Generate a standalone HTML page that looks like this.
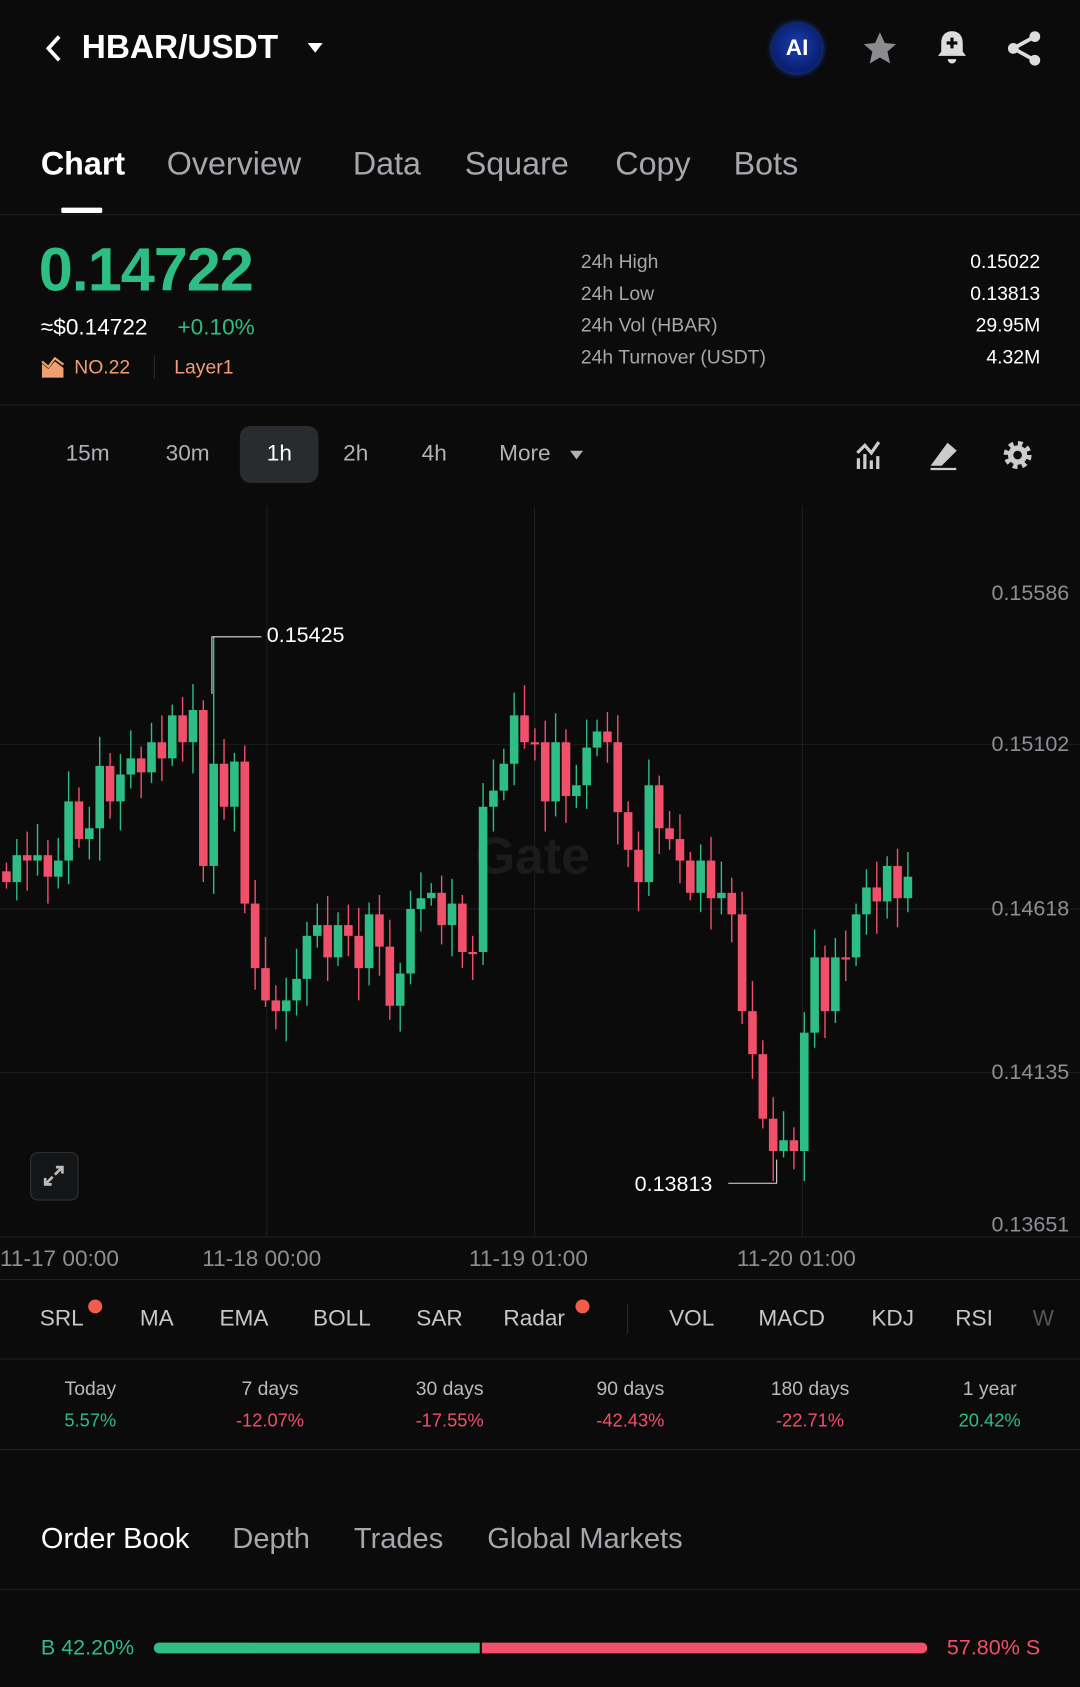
<!DOCTYPE html>
<html><head><meta charset="utf-8"><style>
html,body{margin:0;padding:0;background:#0b0b0c;width:1080px;height:1687px;overflow:hidden}
#w{position:absolute;left:0;top:0;width:1004px;height:1568px;transform:scale(1.07570);transform-origin:0 0;font-family:"Liberation Sans",sans-serif;color:#fff;background:#0b0b0c}
.a{position:absolute;white-space:nowrap}
.l{position:absolute;left:0;width:1004px;height:1px;background:#1f2022}
.g{color:#2ebd85}.r{color:#f0506a}.gr{color:#a5a7ab}
.t{font-size:30px;top:136px}
.tf{font-size:21px;top:410px;color:#b0b2b6}
.ind{font-size:21px;top:1214px;color:#c6c7ca}
.sl{font-size:18px;top:1281px;color:#b8babd;width:120px;text-align:center}
.sv{font-size:17px;top:1311px;width:120px;text-align:center}
.yl{font-size:20px;color:#8d8f93;right:10px}
</style></head><body><div id="w">
<svg class="a" style="left:38px;top:30px" width="24" height="30"><path d="M17 4 L7 15 L17 26" stroke="#fff" stroke-width="3.5" fill="none"/></svg>
<div class="a" style="left:76px;top:26px;font-size:31px;font-weight:bold">HBAR/USDT</div>
<svg class="a" style="left:285px;top:38px" width="16" height="12"><path d="M1 2 H15 L8 11Z" fill="#fff"/></svg>
<div class="a" style="left:718px;top:22px;width:46px;height:46px;border-radius:50%;background:radial-gradient(circle at 50% 45%,#1b3fb0,#0a1e70 70%,#1a4cff);box-shadow:0 0 6px #1a5cff;color:#fff;font-weight:bold;font-size:21px;text-align:center;line-height:46px">AI</div>
<svg class="a" style="left:800px;top:27px" width="36" height="36"><path d="M18 3 L22.5 13 L33 14 L25 21 L27.5 32 L18 26.5 L8.5 32 L11 21 L3 14 L13.5 13Z" fill="#8a8c90"/></svg>
<svg class="a" style="left:868px;top:26px" width="34" height="36"><path d="M17 3 C10 3 7 8 7 14 V22 L4 26 H30 L27 22 V14 C27 8 24 3 17 3Z M13 29 H21 A4 4 0 0 1 13 29Z" fill="#ddd"/><path d="M17 9 V19 M12 14 H22" stroke="#0b0b0c" stroke-width="3"/></svg>
<svg class="a" style="left:934px;top:27px" width="36" height="36"><circle cx="28" cy="7" r="5" fill="#ddd"/><circle cx="8" cy="18" r="5" fill="#ddd"/><circle cx="28" cy="29" r="5" fill="#ddd"/><path d="M28 7 L8 18 L28 29" stroke="#ddd" stroke-width="3.5" fill="none"/></svg>

<div class="a t" style="left:38px;font-weight:bold">Chart</div>
<div class="a t gr" style="left:155px">Overview</div>
<div class="a t gr" style="left:328px">Data</div>
<div class="a t gr" style="left:432px">Square</div>
<div class="a t gr" style="left:572px">Copy</div>
<div class="a t gr" style="left:682px">Bots</div>
<div class="a" style="left:57px;top:193px;width:38px;height:5px;background:#fff;border-radius:1px"></div>
<div class="l" style="top:199px"></div>

<div class="a g" style="left:36px;top:218px;font-size:57px;font-weight:bold;letter-spacing:-1px">0.14722</div>
<div class="a" style="left:38px;top:293px;font-size:21px">≈$0.14722</div>
<div class="a g" style="left:165px;top:293px;font-size:21px">+0.10%</div>
<svg class="a" style="left:38px;top:330px" width="22" height="22"><path d="M1 21 V8 L7 13 L13 6 L21 12 V21Z" fill="#f0a070"/><path d="M1 6 L7 11 L13 3 L21 9" stroke="#f0a070" stroke-width="2" fill="none"/></svg>
<div class="a" style="left:69px;top:331px;font-size:18px;color:#f0a070">NO.22</div>
<div class="a" style="left:143px;top:330px;width:1px;height:22px;background:#2a2b2e"></div>
<div class="a" style="left:162px;top:331px;font-size:18px;color:#f0a070">Layer1</div>

<div class="a gr" style="left:540px;top:233px;font-size:18px">24h High</div>
<div class="a gr" style="left:540px;top:263px;font-size:18px">24h Low</div>
<div class="a gr" style="left:540px;top:292px;font-size:18px">24h Vol (HBAR)</div>
<div class="a gr" style="left:540px;top:322px;font-size:18px">24h Turnover (USDT)</div>
<div class="a" style="right:37px;top:233px;font-size:18px">0.15022</div>
<div class="a" style="right:37px;top:263px;font-size:18px">0.13813</div>
<div class="a" style="right:37px;top:292px;font-size:18px">29.95M</div>
<div class="a" style="right:37px;top:322px;font-size:18px">4.32M</div>
<div class="l" style="top:376px"></div>

<div class="a" style="left:223px;top:396px;width:73px;height:53px;background:#2a2b2e;border-radius:10px"></div>
<div class="a tf" style="left:61px">15m</div>
<div class="a tf" style="left:154px">30m</div>
<div class="a tf" style="left:248px;color:#fff">1h</div>
<div class="a tf" style="left:319px">2h</div>
<div class="a tf" style="left:392px">4h</div>
<div class="a tf" style="left:464px">More</div>
<svg class="a" style="left:529px;top:418px" width="14" height="10"><path d="M1 1 H13 L7 9Z" fill="#b0b2b6"/></svg>
<svg class="a" style="left:795px;top:408px" width="30" height="30"><path d="M3 28 V18 M9 28 V14 M15 28 V20 M21 28 V16" stroke="#ccc" stroke-width="3"/><path d="M2 13 L9 6 L15 13 L22 3" stroke="#ccc" stroke-width="3" fill="none"/></svg>
<svg class="a" style="left:863px;top:408px" width="30" height="30"><path d="M2 28 H26 M4 24 L18 5 L25 11 L12 24Z" fill="#ccc" stroke="#ccc" stroke-width="2"/></svg>
<svg class="a" style="left:931px;top:408px" width="30" height="30"><circle cx="15" cy="15" r="10" fill="none" stroke="#ccc" stroke-width="6" stroke-dasharray="4 3.85"/><circle cx="15" cy="15" r="9" fill="#ccc"/><circle cx="15" cy="15" r="4" fill="#0b0b0c"/></svg>

<svg class="a" style="left:0;top:0" width="1004" height="1200">
<g stroke="#1c1d1f" stroke-width="1">
<line x1="0" y1="692" x2="1004" y2="692"/><line x1="0" y1="845" x2="1004" y2="845"/><line x1="0" y1="997" x2="1004" y2="997"/><line x1="0" y1="1150" x2="1004" y2="1150"/>
<line x1="248" y1="470" x2="248" y2="1150"/><line x1="497" y1="470" x2="497" y2="1150"/><line x1="746" y1="470" x2="746" y2="1150"/>
</g>
<text x="495" y="812" font-size="48" font-weight="bold" fill="#1a1b1d" text-anchor="middle" font-family="Liberation Sans">Gate</text>
<g id="cd"></g>
<path d="M197 645 V592 H243" stroke="#ddd" fill="none" stroke-width="1"/>
<text x="248" y="597" font-size="20" fill="#fff" font-family="Liberation Sans">0.15425</text>
<path d="M722 1078 V1100 H677" stroke="#ddd" fill="none" stroke-width="1"/>
<text x="590" y="1107" font-size="20" fill="#fff" font-family="Liberation Sans">0.13813</text>
</svg>
<div class="a yl" style="top:541px">0.15586</div>
<div class="a yl" style="top:681px">0.15102</div>
<div class="a yl" style="top:834px">0.14618</div>
<div class="a yl" style="top:986px">0.14135</div>
<div class="a yl" style="top:1128px">0.13651</div>
<div class="a" style="left:28px;top:1071px;width:43px;height:43px;border:1.5px solid #333;border-radius:7px;background:#141517"></div>
<svg class="a" style="left:38px;top:1081px" width="24" height="24"><path d="M14 4 H20 V10 M20 4 L13 11 M10 20 H4 V14 M4 20 L11 13" stroke="#bbb" stroke-width="2.5" fill="none"/></svg>
<div class="a" style="left:0;top:1159px;font-size:21px;color:#8d8f93">11-17 00:00</div>
<div class="a" style="left:188px;top:1159px;font-size:21px;color:#8d8f93">11-18 00:00</div>
<div class="a" style="left:436px;top:1159px;font-size:21px;color:#8d8f93">11-19 01:00</div>
<div class="a" style="left:685px;top:1159px;font-size:21px;color:#8d8f93">11-20 01:00</div>
<div class="l" style="top:1189px"></div>

<div class="a ind" style="left:37px">SRL</div><div class="a" style="left:82px;top:1208px;width:13px;height:13px;border-radius:50%;background:#f25c4a"></div>
<div class="a ind" style="left:130px">MA</div>
<div class="a ind" style="left:204px">EMA</div>
<div class="a ind" style="left:291px">BOLL</div>
<div class="a ind" style="left:387px">SAR</div>
<div class="a ind" style="left:468px">Radar</div><div class="a" style="left:535px;top:1208px;width:13px;height:13px;border-radius:50%;background:#f25c4a"></div>
<div class="a" style="left:583px;top:1212px;width:1px;height:28px;background:#2a2b2e"></div>
<div class="a ind" style="left:622px">VOL</div>
<div class="a ind" style="left:705px">MACD</div>
<div class="a ind" style="left:810px">KDJ</div>
<div class="a ind" style="left:888px">RSI</div>
<div class="a ind" style="left:960px;color:#555">W</div>
<div class="l" style="top:1263px"></div>

<div class="a sl" style="left:24px">Today</div><div class="a sv g" style="left:24px">5.57%</div>
<div class="a sl" style="left:191px">7 days</div><div class="a sv r" style="left:191px">-12.07%</div>
<div class="a sl" style="left:358px">30 days</div><div class="a sv r" style="left:358px">-17.55%</div>
<div class="a sl" style="left:526px">90 days</div><div class="a sv r" style="left:526px">-42.43%</div>
<div class="a sl" style="left:693px">180 days</div><div class="a sv r" style="left:693px">-22.71%</div>
<div class="a sl" style="left:860px">1 year</div><div class="a sv g" style="left:860px">20.42%</div>
<div class="l" style="top:1347px"></div>

<div class="a" style="left:38px;top:1415px;font-size:27px">Order Book</div>
<div class="a gr" style="left:216px;top:1415px;font-size:27px">Depth</div>
<div class="a gr" style="left:329px;top:1415px;font-size:27px">Trades</div>
<div class="a gr" style="left:453px;top:1415px;font-size:27px">Global Markets</div>
<div class="l" style="top:1477px"></div>

<div class="a g" style="left:38px;top:1521px;font-size:20px">B 42.20%</div>
<div class="a" style="left:143px;top:1527px;width:303px;height:10px;background:#2ebd85;border-radius:5px 0 0 5px"></div>
<div class="a" style="left:448px;top:1527px;width:414px;height:10px;background:#f0506a;border-radius:0 5px 5px 0"></div>
<div class="a r" style="right:37px;top:1521px;font-size:20px">57.80% S</div>
</div>
<script>
(function(){
var c=[820,795,800,795,815,800,745,780,770,712,745,720,705,718,690,705,665,690,660,805,710,750,708,840,900,930,940,930,910,870,860,890,860,870,900,850,880,935,905,845,835,830,860,840,885,885,750,735,710,665,690,690,745,690,740,730,695,680,690,755,790,820,730,770,780,800,830,800,835,830,850,940,980,1040,1070,1060,1070,960,890,940,890,890,850,825,838,805,835,815];
var n=c.length,s=(844-6)/(n-1),prev=810,g=document.getElementById('cd'),NS='http://www.w3.org/2000/svg';
for(var i=0;i<n;i++){var o=prev,cl=c[i],x=6+i*s,tp=Math.min(o,cl),bt=Math.max(o,cl);
var hi=tp-(8+(i*7)%22),lo=bt+(6+(i*11)%25);
if(Math.abs(x-197)<5)hi=592; if(Math.abs(x-722)<5)lo=1098;
var col=cl<o?'#2ebd85':'#f0506a';if(bt-tp<2){bt=tp+2;}
var ln=document.createElementNS(NS,'line');ln.setAttribute('x1',x);ln.setAttribute('x2',x);ln.setAttribute('y1',hi);ln.setAttribute('y2',lo);ln.setAttribute('stroke',col);ln.setAttribute('stroke-width','1.3');g.appendChild(ln);
var rc=document.createElementNS(NS,'rect');rc.setAttribute('x',x-4);rc.setAttribute('y',tp);rc.setAttribute('width',8);rc.setAttribute('height',bt-tp);rc.setAttribute('fill',col);g.appendChild(rc);
prev=cl;}
})();
</script>
</body></html>
